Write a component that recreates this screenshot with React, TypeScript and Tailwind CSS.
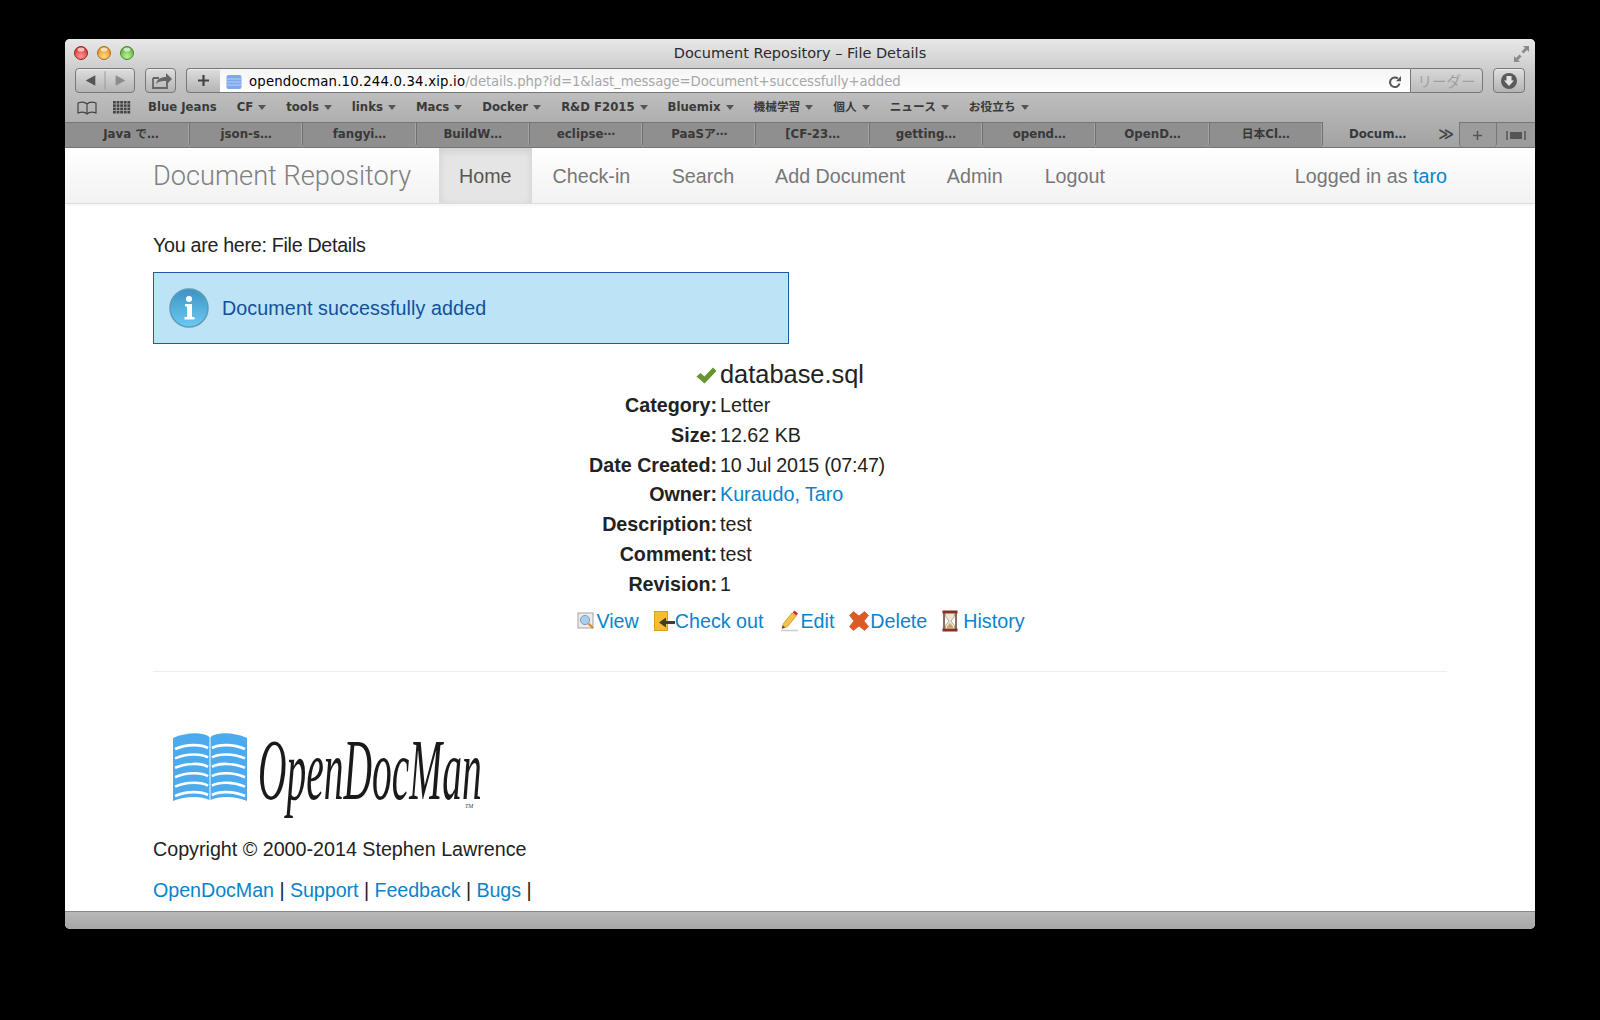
import React from 'react';

const bookmarks = [
  { label: 'Blue Jeans', menu: false },
  { label: 'CF', menu: true },
  { label: 'tools', menu: true },
  { label: 'links', menu: true },
  { label: 'Macs', menu: true },
  { label: 'Docker', menu: true },
  { label: 'R&D F2015', menu: true },
  { label: 'Bluemix', menu: true },
  { label: '機械学習', menu: true },
  { label: '個人', menu: true },
  { label: 'ニュース', menu: true },
  { label: 'お役立ち', menu: true },
];

const tabs = ['Java で…', 'json-s…', 'fangyi…', 'BuildW…', 'eclipse⋯', 'PaaSア⋯', '[CF-23…', 'getting…', 'opend…', 'OpenD…', '日本Cl…'];

const details = [
  ['Category:', 'Letter'],
  ['Size:', '12.62 KB'],
  ['Date Created:', '10 Jul 2015 (07:47)'],
  ['Owner:', 'Kuraudo, Taro'],
  ['Description:', 'test'],
  ['Comment:', 'test'],
  ['Revision:', '1'],
];

function Light({ from, to, ring }: { from: string; to: string; ring: string }) {
  return (
    <svg width="14" height="14" viewBox="0 0 14 14">
      <defs>
        <radialGradient id={`l${from.slice(1)}`} cx="50%" cy="75%" r="70%">
          <stop offset="0%" stopColor={to} />
          <stop offset="100%" stopColor={from} />
        </radialGradient>
      </defs>
      <circle cx="7" cy="7" r="6.5" fill={`url(#l${from.slice(1)})`} stroke={ring} strokeWidth="1" />
      <ellipse cx="7" cy="3.6" rx="3.4" ry="2" fill="#fff" opacity="0.65" />
    </svg>
  );
}

function ToolButton({ className, children }: { className: string; children: React.ReactNode }) {
  return (
    <div className={`flex h-[25px] items-center justify-center rounded-[4px] border border-[#777] bg-gradient-to-b from-[#dedede] to-[#b4b4b4] shadow-[inset_0_1px_0_#eee] ${className}`}>
      {children}
    </div>
  );
}

function Caret() {
  return <span className="ml-[5px] inline-block h-0 w-0 border-x-[4px] border-t-[5px] border-x-transparent border-t-[#555]" />;
}

function ViewIcon() {
  return (
    <svg width="18" height="19" viewBox="0 0 18 19">
      <rect x="1" y="2" width="15" height="15" fill="#ececec" stroke="#a5a5a5" />
      <circle cx="8" cy="9" r="4.6" fill="#a6cff0" stroke="#8a9caa" />
      <path d="M11.5 12.5 16 17" stroke="#d98a2b" strokeWidth="2.2" />
    </svg>
  );
}

function CheckoutIcon() {
  return (
    <svg width="21" height="20" viewBox="0 0 21 20">
      <rect x="0.5" y="0.5" width="13" height="19" fill="#f7bd2e" stroke="#dca020" />
      <path d="M21 11.500H10" stroke="#3d3d33" strokeWidth="3" />
      <path d="M5 11.500l7-5v10z" fill="#3d3d33" />
    </svg>
  );
}

function EditIcon() {
  return (
    <svg width="20" height="22" viewBox="0 0 20 22">
      <path d="M1 20.500h17" stroke="#ccc" strokeWidth="1.5" />
      <path d="M2 18.500l1.500-5L12 3l4 3.200-8.500 10.400z" fill="#f2c24f" stroke="#d9a12f" />
      <path d="M2 18.500l.8-3 2.400 1.800z" fill="#444" />
      <path d="M12.600 2.400 14.400 0.500l3.600 3-1.600 2.200z" fill="#c9312c" />
    </svg>
  );
}

function DeleteIcon() {
  return (
    <svg width="20" height="20" viewBox="0 0 20 20">
      <path d="M4.500 0.500 10 5 15.500 0.500 19.500 4.500 15 10l4.500 5.500-4 4L10 15l-5.500 4.500-4-4L5 10 .5 4.500z" fill="#dc5a24" stroke="#c8481a" strokeWidth="0.6" />
    </svg>
  );
}

function HistoryIcon() {
  return (
    <svg width="16" height="22" viewBox="0 0 16 22">
      <path d="M2 3v16M14 3v16" stroke="#6d3a2a" strokeWidth="1.5" />
      <rect x="0.5" y="0.5" width="15" height="3" fill="#8b2f22" />
      <rect x="0.5" y="18.500" width="15" height="3" fill="#8b2f22" />
      <path d="M3.500 3.500h9v3L9 11l3.500 4.500v3h-9v-3L7 11 3.500 6.500z" fill="#e9e4d6" stroke="#9a8a78" strokeWidth="0.7" />
      <path d="M5 16.500 8 13l3 3.500v2H5z" fill="#c9a669" />
    </svg>
  );
}

function Logo() {
  const stripes = [0, 1, 2, 3, 4, 5];
  return (
    <svg width="330" height="100" viewBox="0 0 330 100">
      <path d="M0 15C14 9 30 9 36.500 14V77C28 73 12 73 0 78Z" fill="#4cabee" />
      <path d="M74 15C60 9 44 9 37.500 14V77C46 73 62 73 74 78Z" fill="#4cabee" />
      {stripes.map((s) => (
        <g key={s} fill="none" stroke="#fff" strokeWidth="2.6">
          <path d={`M2 ${26 + s * 9.4}C14 ${21 + s * 9.4} 28 ${21 + s * 9.4} 35 ${25 + s * 9.4}`} />
          <path d={`M72 ${26 + s * 9.4}C60 ${21 + s * 9.4} 46 ${21 + s * 9.4} 39 ${25 + s * 9.4}`} />
        </g>
      ))}
      <text transform="translate(85 76) scale(1 2.2)" fontFamily="'Liberation Serif', serif" fontStyle="italic" fontSize="39.500" fill="#1a1a1a">OpenDocMan</text>
      <text x="292" y="85" fontFamily="'Liberation Serif', serif" fontStyle="italic" fontSize="6" fill="#444">TM</text>
    </svg>
  );
}

export default function App() {
  return (
    <div className="h-[1020px] w-[1600px] overflow-hidden bg-black pl-[65px] pt-[39px] font-['Liberation_Sans',sans-serif]">
      <div className="flex h-[890px] w-[1470px] flex-col overflow-hidden rounded-[5px] bg-white">
        {/* Safari chrome */}
        <div className="bg-gradient-to-b from-[#e8e8e8] via-[#c6c6c6] via-[35%] to-[#a2a2a2]">
          <div className="relative flex h-[29px] items-center justify-center font-['DejaVu_Sans',sans-serif] text-[14.5px] text-[#2a2a2a]">
            <div className="absolute left-[9px] top-[7px] flex gap-[9px]">
              <Light from="#d8302c" to="#ff9a90" ring="#8f2a26" />
              <Light from="#e48d16" to="#ffd98a" ring="#a8701e" />
              <Light from="#55ad35" to="#bdf09a" ring="#4c8a32" />
            </div>
            Document Repository – File Details
            <svg className="absolute right-[5px] top-[6px]" width="17" height="18" viewBox="0 0 17 18">
              <path d="M16 1h-6l2 2-3.500 3.500 2 2L14 5l2 2zM1 17h6l-2-2 3.500-3.500-2-2L3 13l-2-2z" fill="#8a8a8a" />
            </svg>
          </div>
          <div className="flex h-[25px] items-center pl-[10px] pr-[10px]">
            <ToolButton className="w-[60px]">
              <svg width="60" height="25" viewBox="0 0 60 25">
                <path d="M20 7v11l-10-5.500z" fill="#555" />
                <path d="M30 3v19" stroke="#999" />
                <path d="M41 7v11l10-5.500z" fill="#8c8c8c" />
              </svg>
            </ToolButton>
            <ToolButton className="ml-[10px] w-[31px]">
              <svg width="24" height="20" viewBox="0 0 24 20">
                <path d="M4 7h6M4 7v10h14v-5" fill="none" stroke="#666" strokeWidth="1.800" />
                <path d="M7 13c1-5 5-7 10-7V2l6 6-6 6v-4c-4 0-7 0-10 3z" fill="#666" />
              </svg>
            </ToolButton>
            <ToolButton className="ml-[10px] w-[34px] rounded-r-none border-r-0">
              <svg width="15" height="15" viewBox="0 0 15 15">
                <path d="M7.500 2v11M2 7.500h11" stroke="#444" strokeWidth="2.200" />
              </svg>
            </ToolButton>
            <div className="flex h-[25px] w-[1190px] items-center border-y border-y-[#777] bg-gradient-to-b from-[#f5f5f5] to-white pl-[6px] pr-[8px] pt-[2px] font-['DejaVu_Sans',sans-serif] text-[13.27px]">
              <svg width="16" height="16" viewBox="0 0 16 16" className="mr-[7px] shrink-0">
                <rect x="0.5" y="1" width="15" height="14" rx="2" fill="#7fa7ee" />
                <path d="M1 5h14M1 8h14M1 11h14" stroke="#b9d0f7" />
              </svg>
              <span className="tracking-[0.18px] text-black">opendocman.10.244.0.34.xip.io</span>
              <span className="tracking-[-0.1px] text-[#a8a8a8]">/details.php?id=1&amp;last_message=Document+successfully+added</span>
              <svg className="ml-auto" width="14" height="14" viewBox="0 0 14 14">
                <path d="M11.500 8.500a4.800 4.800 0 1 1-1.600-5" fill="none" stroke="#555" strokeWidth="2" />
                <path d="M8 6.200h5V1z" fill="#555" />
              </svg>
            </div>
            <div className="flex h-[25px] w-[73px] items-center justify-center rounded-r-[4px] border border-[#777] bg-gradient-to-b from-[#d8d8d8] to-[#bcbcbc] font-['Noto_Sans_CJK_JP',sans-serif] text-[14.5px] text-[#a0a0a0]">
              リーダー
            </div>
            <ToolButton className="ml-[10px] w-[32px]">
              <svg width="18" height="18" viewBox="0 0 18 18">
                <circle cx="9" cy="9" r="8" fill="#5a5a5a" />
                <path d="M6.500 4h5v4.500H14L9 14 4 8.500h2.500z" fill="#e4e4e4" />
              </svg>
            </ToolButton>
          </div>
          <div className="flex h-[29px] items-center pl-[12px] font-['DejaVu_Sans','Noto_Sans_CJK_JP',sans-serif] text-[11.7px] font-bold text-[#3a3a3a]">
            <svg width="20" height="14" viewBox="0 0 20 14" className="mr-[16px]">
              <path d="M10 3C8 1 4 1 1 2v10c3-1 7-1 9 1 2-2 6-2 9-1V2c-3-1-7-1-9 1zM10 3v10" fill="none" stroke="#444" strokeWidth="1.200" />
            </svg>
            <svg width="18" height="13" viewBox="0 0 18 13" className="mr-[17px]" fill="#444">
              {[0, 1, 2, 3].flatMap((r) => [0, 1, 2, 3, 4].map((c) => <rect key={`${r}-${c}`} x={c * 3.6} y={r * 3.3} width="2.8" height="2.6" />))}
            </svg>
            <div className="flex gap-[20px]">
              {bookmarks.map((b) => (
                <span key={b.label} className="flex items-center whitespace-nowrap">
                  {b.label}
                  {b.menu && <Caret />}
                </span>
              ))}
            </div>
          </div>
          <div className="flex h-[26px] border-b border-b-[#777] font-['DejaVu_Sans','Noto_Sans_CJK_JP',sans-serif] text-[11.8px] font-bold text-[#383838]">
            {tabs.map((t, i) => (
              <div key={t} className={`flex items-center justify-center rounded-br-[4px] border-r border-t border-r-[#707070] border-t-[#777] bg-[#8f8f8f] shadow-[inset_-1px_0_0_#a5a5a5] ${i === 0 ? 'w-[125px] pl-[8px]' : 'w-[113.3px]'}`}>
                {t}
              </div>
            ))}
            <div className="flex w-[136px] items-center pl-[26px]">
              Docum…
              <span className="ml-[32px] text-[15px] text-[#444]">≫</span>
            </div>
            <div className="flex w-[38px] items-center justify-center rounded-b-[4px] border-x border-t border-x-[#777] border-t-[#777] bg-[#9c9c9c]">
              <svg width="9" height="9" viewBox="0 0 9 9">
                <path d="M4.500 0v9M0 4.500h9" stroke="#555" strokeWidth="1.600" />
              </svg>
            </div>
            <div className="flex flex-1 items-center justify-center border-t border-t-[#777] bg-[#9c9c9c]">
              <svg width="20" height="9" viewBox="0 0 20 9">
                <rect x="4" y="1" width="12" height="7" fill="#555" />
                <path d="M1 0v9M19 0v9" stroke="#555" strokeWidth="1.500" />
              </svg>
            </div>
          </div>
        </div>

        {/* Navbar */}
        <div className="flex h-[56px] shrink-0 items-stretch border-b border-b-[#ddd] bg-gradient-to-b from-white to-[#f2f2f2] pl-[88px] pr-[88px] text-[19.7px] text-[#777] shadow-[0_1px_4px_rgba(0,0,0,0.06)]">
          <div className="mr-[29px] flex w-[257px] items-center whitespace-nowrap pt-[2px] font-['Roboto',sans-serif] text-[27.2px] font-light text-[#808080]">Document Repository</div>
          <div className="flex items-center bg-[#e5e5e5] px-[20px] pt-[2px] text-[#555] shadow-[inset_0_3px_8px_rgba(0,0,0,0.1)]">Home</div>
          <div className="flex items-center px-[21px] pt-[2px]">Check-in</div>
          <div className="flex items-center px-[20.5px] pt-[2px]">Search</div>
          <div className="flex items-center px-[20.5px] pt-[2px]">Add Document</div>
          <div className="flex items-center px-[21px] pt-[2px]">Admin</div>
          <div className="flex items-center px-[21px] pt-[2px]">Logout</div>
          <div className="ml-auto flex items-center pt-[2px]">
            Logged in as&nbsp;<span className="text-[#0a83ce]">taro</span>
          </div>
        </div>

        {/* Page */}
        <div className="flex-1 px-[88px] text-[19.7px] leading-[30px] text-[#222]">
          <p className="mt-[26px] tracking-[-0.3px]">You are here: File Details</p>
          <div className="mt-[12px] flex h-[72px] w-[636px] items-center border border-[#1f5aa6] bg-[#bde3f6] pl-[14px] tracking-[0.1px] text-[#13509c]">
            <svg width="42" height="42" viewBox="0 0 42 42" className="mr-[12px]">
              <defs>
                <linearGradient id="inf" x1="0" y1="0" x2="0" y2="1">
                  <stop offset="0%" stopColor="#3d93c4" />
                  <stop offset="100%" stopColor="#6ccaf2" />
                </linearGradient>
              </defs>
              <circle cx="21" cy="21" r="19" fill="url(#inf)" stroke="#5d9db5" strokeWidth="1.500" />
              <circle cx="21" cy="12" r="3" fill="#fff" />
              <path d="M17 17h7v13h2.500v2.500h-10V30H19V19.500h-2z" fill="#fff" />
            </svg>
            Document successfully added
          </div>

          <div className="mt-[13px] grid grid-cols-[564px_1fr] gap-x-[3px]">
            <div className="flex h-[33px] items-center justify-end pt-[4px]">
              <svg width="21" height="17" viewBox="0 0 21 17">
                <path d="M0.500 9.500 4.500 6l4 3.500L17 0.500l3.500 3.500L8.500 16.500z" fill="#64952f" />
              </svg>
            </div>
            <div className="flex h-[33px] items-center text-[25.4px] text-[#222]">database.sql</div>
            {details.map(([k, v]) => (
              <React.Fragment key={k}>
                <div className="h-[29.8px] text-right font-bold">{k}</div>
                <div className={`h-[29.8px] ${k === 'Owner:' ? 'text-[#0a83ce]' : ''} ${k === 'Date Created:' ? 'tracking-[-0.25px]' : ''}`}>{v}</div>
              </React.Fragment>
            ))}
          </div>

          <div className="mt-[7px] flex justify-center gap-[15px] pl-[2px] text-[#0a83ce]">
            <span className="flex items-center"><ViewIcon /><span className="ml-[1px]">View</span></span>
            <span className="flex items-center"><CheckoutIcon /><span>Check out</span></span>
            <span className="ml-[2px] flex items-center"><EditIcon /><span>Edit</span></span>
            <span className="flex items-center"><DeleteIcon /><span className="ml-[1px]">Delete</span></span>
            <span className="flex items-center"><HistoryIcon /><span className="ml-[5px]">History</span></span>
          </div>

          <div className="mt-[35px] border-t border-t-[#eee]" />
          <div className="mt-[51px] h-[100px] pl-[20px]"><Logo /></div>
          <p className="mt-[11px]">Copyright © 2000-2014 Stephen Lawrence</p>
          <p className="mt-[11px] whitespace-pre tracking-[-0.05px]">
            <span className="text-[#0a83ce]">OpenDocMan</span> | <span className="text-[#0a83ce]">Support</span> | <span className="text-[#0a83ce]">Feedback</span> | <span className="text-[#0a83ce]">Bugs</span> |
          </p>
        </div>

        {/* Status bar */}
        <div className="h-[18px] shrink-0 border-t border-t-[#8a8a8a] bg-gradient-to-b from-[#b8b8b8] to-[#a6a6a6]" />
      </div>
    </div>
  );
}
